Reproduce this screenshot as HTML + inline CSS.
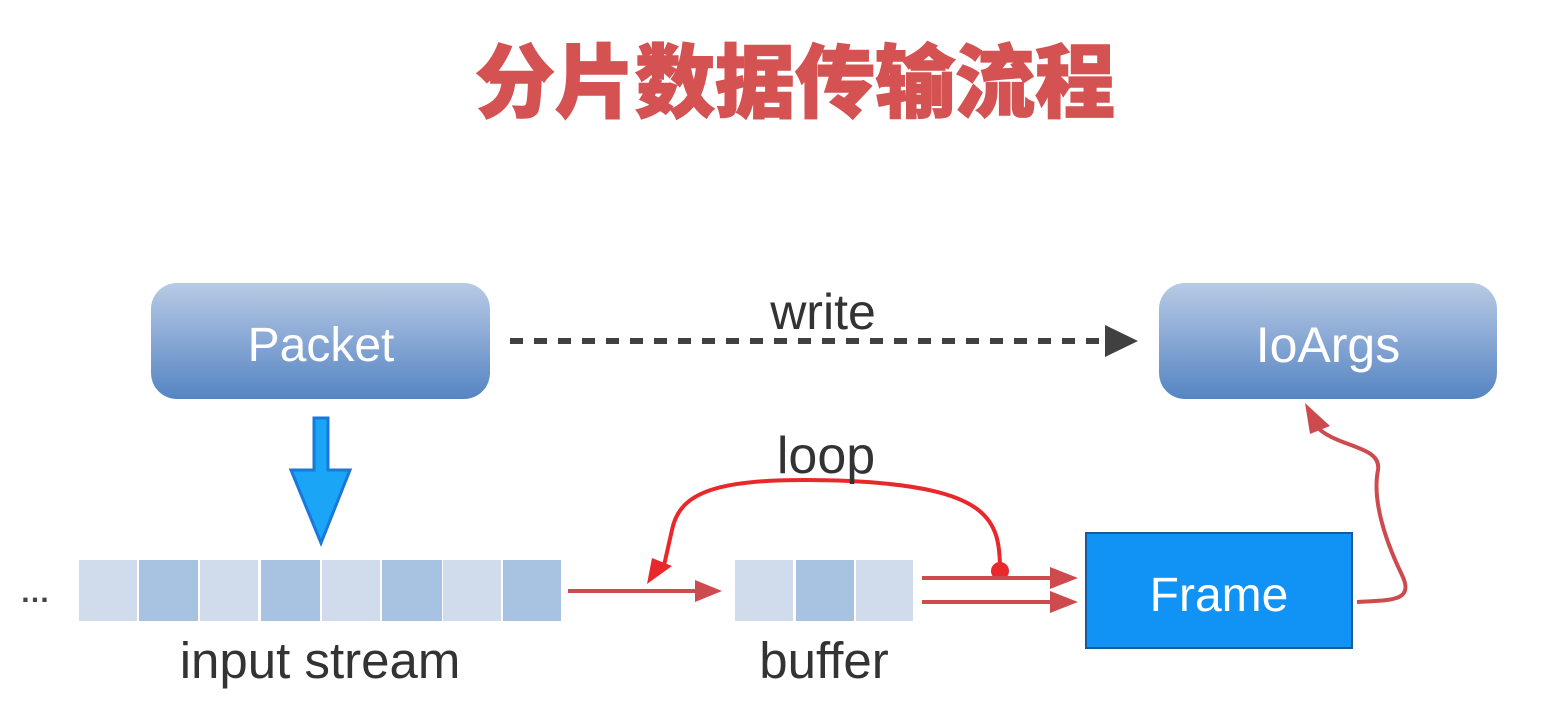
<!DOCTYPE html>
<html><head><meta charset="utf-8"><style>
html,body{margin:0;padding:0;background:#fff;width:1549px;height:728px;overflow:hidden}
svg{display:block}
text{font-family:"Liberation Sans","Noto Sans CJK SC",sans-serif}
</style></head><body>
<svg width="1549" height="728" viewBox="0 0 1549 728" xmlns="http://www.w3.org/2000/svg">
<defs>
<linearGradient id="g" x1="0" y1="0" x2="0" y2="1">
<stop offset="0" stop-color="#b8cbe5"/><stop offset="0.5" stop-color="#87a7d4"/><stop offset="1" stop-color="#5585c2"/>
</linearGradient>
</defs>
<text x="795" y="111" font-size="80" font-weight="900" fill="#d45252" text-anchor="middle" font-family="Noto Sans CJK SC, sans-serif" stroke="#d45252" stroke-width="1.5">分片数据传输流程</text>

<rect x="151" y="283" width="339" height="116" rx="26" fill="url(#g)"/>
<text x="321" y="361" font-size="48" fill="#fff" text-anchor="middle">Packet</text>
<rect x="1159" y="283" width="338" height="116" rx="26" fill="url(#g)"/>
<text x="1328" y="362" font-size="50" fill="#fff" text-anchor="middle">IoArgs</text>

<line x1="510" y1="341" x2="1105" y2="341" stroke="#404040" stroke-width="6" stroke-dasharray="13 11"/>
<polygon points="1105,325 1138,341 1105,357" fill="#404040"/>
<text x="823" y="329" font-size="50" fill="#333" text-anchor="middle">write</text>

<polygon points="314,418 328,418 328,470 350,470 321,543 291,470 314,470" fill="#1aa5f7" stroke="#1a78d8" stroke-width="3"/>

<text x="20" y="602" font-size="30" font-weight="bold" fill="#444">…</text>
<g fill="#d0dcec">
<rect x="79" y="560" width="58" height="61"/><rect x="200" y="560" width="58" height="61"/><rect x="322" y="560" width="58" height="61"/><rect x="443" y="560" width="58" height="61"/>
<rect x="735" y="560" width="58" height="61"/><rect x="856" y="560" width="57" height="61"/>
</g>
<g fill="#a8c3e2">
<rect x="139" y="560" width="59" height="61"/><rect x="261" y="560" width="59" height="61"/><rect x="382" y="560" width="60" height="61"/><rect x="503" y="560" width="58" height="61"/>
<rect x="796" y="560" width="58" height="61"/>
</g>
<text x="320" y="678" font-size="51" fill="#333" text-anchor="middle">input stream</text>
<text x="824" y="678" font-size="51" fill="#333" text-anchor="middle">buffer</text>

<line x1="568" y1="591" x2="700" y2="591" stroke="#cd4a4e" stroke-width="4"/>
<polygon points="695,580 722,591 695,602" fill="#cd4a4e"/>
<path d="M1000,570 C1000,520 990,488 850,481 C720,476 680,490 672,530 L663,570" fill="none" stroke="#e8282a" stroke-width="4"/>
<polygon points="647,584 652,558 672,566" fill="#e8282a"/>
<circle cx="1000" cy="571" r="9" fill="#e8282a"/>
<text x="826" y="473" font-size="52" fill="#333" text-anchor="middle">loop</text>

<line x1="922" y1="578" x2="1055" y2="578" stroke="#cd4a4e" stroke-width="4"/>
<polygon points="1050,567 1078,578 1050,589" fill="#cd4a4e"/>
<line x1="922" y1="602" x2="1055" y2="602" stroke="#cd4a4e" stroke-width="4"/>
<polygon points="1050,591 1078,602 1050,613" fill="#cd4a4e"/>

<rect x="1086" y="533" width="266" height="115" fill="#1192f5" stroke="#1a5a9c" stroke-width="2"/>
<text x="1219" y="611" font-size="48" fill="#fff" text-anchor="middle">Frame</text>

<path d="M1357,602 C1390,600 1415,602 1402,575 C1385,540 1372,500 1378,470 C1382,445 1335,448 1315,425" fill="none" stroke="#cd4a4e" stroke-width="4"/>
<polygon points="1305,403 1330,426 1310,434" fill="#cd4a4e"/>
</svg>
</body></html>
